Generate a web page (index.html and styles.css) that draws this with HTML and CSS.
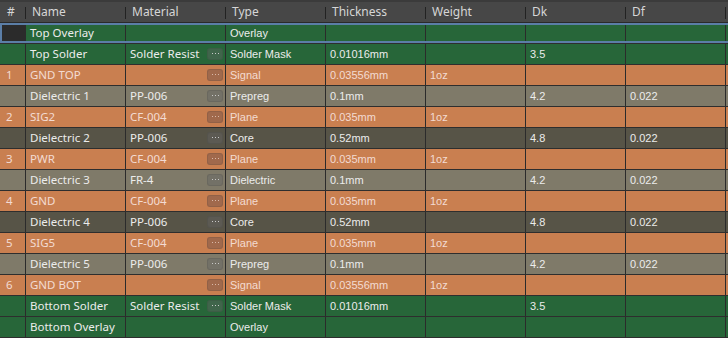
FILE: index.html
```html
<!DOCTYPE html>
<html>
<head>
<meta charset="utf-8">
<link rel="stylesheet" href="styles.css">
</head>
<body>
<div class="stack">
  <div class="row head">
    <div class="c num">#</div><div class="c">Name</div><div class="c">Material</div><div class="c">Type</div><div class="c">Thickness</div><div class="c">Weight</div><div class="c">Dk</div><div class="c">Df</div><div class="c last"></div>
  </div>

  <div class="row green selected">
    <div class="c num focus"></div><div class="c nm">Top Overlay</div><div class="c mat"></div><div class="c t">Overlay</div><div class="c t"></div><div class="c t"></div><div class="c t"></div><div class="c t"></div><div class="c last"></div>
  </div>
  <div class="row green">
    <div class="c num"></div><div class="c nm">Top Solder</div><div class="c mat"><span>Solder Resist</span><i class="btn"><svg width="7" height="2" viewBox="0 0 7 2"><rect x="0" y="0" width="1" height="1"/><rect x="3" y="0" width="1" height="1"/><rect x="6" y="0" width="1" height="1"/></svg></i></div><div class="c t">Solder Mask</div><div class="c t">0.01016mm</div><div class="c t"></div><div class="c t">3.5</div><div class="c t"></div><div class="c last"></div>
  </div>
  <div class="row orange">
    <div class="c num">1</div><div class="c nm">GND TOP</div><div class="c mat"><span></span><i class="btn"><svg width="7" height="2" viewBox="0 0 7 2"><rect x="0" y="0" width="1" height="1"/><rect x="3" y="0" width="1" height="1"/><rect x="6" y="0" width="1" height="1"/></svg></i></div><div class="c t">Signal</div><div class="c t">0.03556mm</div><div class="c t">1oz</div><div class="c t"></div><div class="c t"></div><div class="c last"></div>
  </div>
  <div class="row prepreg">
    <div class="c num"></div><div class="c nm">Dielectric 1</div><div class="c mat"><span>PP-006</span><i class="btn"><svg width="7" height="2" viewBox="0 0 7 2"><rect x="0" y="0" width="1" height="1"/><rect x="3" y="0" width="1" height="1"/><rect x="6" y="0" width="1" height="1"/></svg></i></div><div class="c t">Prepreg</div><div class="c t">0.1mm</div><div class="c t"></div><div class="c t">4.2</div><div class="c t">0.022</div><div class="c last"></div>
  </div>
  <div class="row orange">
    <div class="c num">2</div><div class="c nm">SIG2</div><div class="c mat"><span>CF-004</span><i class="btn"><svg width="7" height="2" viewBox="0 0 7 2"><rect x="0" y="0" width="1" height="1"/><rect x="3" y="0" width="1" height="1"/><rect x="6" y="0" width="1" height="1"/></svg></i></div><div class="c t">Plane</div><div class="c t">0.035mm</div><div class="c t">1oz</div><div class="c t"></div><div class="c t"></div><div class="c last"></div>
  </div>
  <div class="row core">
    <div class="c num"></div><div class="c nm">Dielectric 2</div><div class="c mat"><span>PP-006</span><i class="btn"><svg width="7" height="2" viewBox="0 0 7 2"><rect x="0" y="0" width="1" height="1"/><rect x="3" y="0" width="1" height="1"/><rect x="6" y="0" width="1" height="1"/></svg></i></div><div class="c t">Core</div><div class="c t">0.52mm</div><div class="c t"></div><div class="c t">4.8</div><div class="c t">0.022</div><div class="c last"></div>
  </div>
  <div class="row orange">
    <div class="c num">3</div><div class="c nm">PWR</div><div class="c mat"><span>CF-004</span><i class="btn"><svg width="7" height="2" viewBox="0 0 7 2"><rect x="0" y="0" width="1" height="1"/><rect x="3" y="0" width="1" height="1"/><rect x="6" y="0" width="1" height="1"/></svg></i></div><div class="c t">Plane</div><div class="c t">0.035mm</div><div class="c t">1oz</div><div class="c t"></div><div class="c t"></div><div class="c last"></div>
  </div>
  <div class="row prepreg">
    <div class="c num"></div><div class="c nm">Dielectric 3</div><div class="c mat"><span>FR-4</span><i class="btn"><svg width="7" height="2" viewBox="0 0 7 2"><rect x="0" y="0" width="1" height="1"/><rect x="3" y="0" width="1" height="1"/><rect x="6" y="0" width="1" height="1"/></svg></i></div><div class="c t">Dielectric</div><div class="c t">0.1mm</div><div class="c t"></div><div class="c t">4.2</div><div class="c t">0.022</div><div class="c last"></div>
  </div>
  <div class="row orange">
    <div class="c num">4</div><div class="c nm">GND</div><div class="c mat"><span>CF-004</span><i class="btn"><svg width="7" height="2" viewBox="0 0 7 2"><rect x="0" y="0" width="1" height="1"/><rect x="3" y="0" width="1" height="1"/><rect x="6" y="0" width="1" height="1"/></svg></i></div><div class="c t">Plane</div><div class="c t">0.035mm</div><div class="c t">1oz</div><div class="c t"></div><div class="c t"></div><div class="c last"></div>
  </div>
  <div class="row core">
    <div class="c num"></div><div class="c nm">Dielectric 4</div><div class="c mat"><span>PP-006</span><i class="btn"><svg width="7" height="2" viewBox="0 0 7 2"><rect x="0" y="0" width="1" height="1"/><rect x="3" y="0" width="1" height="1"/><rect x="6" y="0" width="1" height="1"/></svg></i></div><div class="c t">Core</div><div class="c t">0.52mm</div><div class="c t"></div><div class="c t">4.8</div><div class="c t">0.022</div><div class="c last"></div>
  </div>
  <div class="row orange">
    <div class="c num">5</div><div class="c nm">SIG5</div><div class="c mat"><span>CF-004</span><i class="btn"><svg width="7" height="2" viewBox="0 0 7 2"><rect x="0" y="0" width="1" height="1"/><rect x="3" y="0" width="1" height="1"/><rect x="6" y="0" width="1" height="1"/></svg></i></div><div class="c t">Plane</div><div class="c t">0.035mm</div><div class="c t">1oz</div><div class="c t"></div><div class="c t"></div><div class="c last"></div>
  </div>
  <div class="row prepreg">
    <div class="c num"></div><div class="c nm">Dielectric 5</div><div class="c mat"><span>PP-006</span><i class="btn"><svg width="7" height="2" viewBox="0 0 7 2"><rect x="0" y="0" width="1" height="1"/><rect x="3" y="0" width="1" height="1"/><rect x="6" y="0" width="1" height="1"/></svg></i></div><div class="c t">Prepreg</div><div class="c t">0.1mm</div><div class="c t"></div><div class="c t">4.2</div><div class="c t">0.022</div><div class="c last"></div>
  </div>
  <div class="row orange">
    <div class="c num">6</div><div class="c nm">GND BOT</div><div class="c mat"><span></span><i class="btn"><svg width="7" height="2" viewBox="0 0 7 2"><rect x="0" y="0" width="1" height="1"/><rect x="3" y="0" width="1" height="1"/><rect x="6" y="0" width="1" height="1"/></svg></i></div><div class="c t">Signal</div><div class="c t">0.03556mm</div><div class="c t">1oz</div><div class="c t"></div><div class="c t"></div><div class="c last"></div>
  </div>
  <div class="row green">
    <div class="c num"></div><div class="c nm">Bottom Solder</div><div class="c mat"><span>Solder Resist</span><i class="btn"><svg width="7" height="2" viewBox="0 0 7 2"><rect x="0" y="0" width="1" height="1"/><rect x="3" y="0" width="1" height="1"/><rect x="6" y="0" width="1" height="1"/></svg></i></div><div class="c t">Solder Mask</div><div class="c t">0.01016mm</div><div class="c t"></div><div class="c t">3.5</div><div class="c t"></div><div class="c last"></div>
  </div>
  <div class="row green">
    <div class="c num"></div><div class="c nm">Bottom Overlay</div><div class="c mat"></div><div class="c t">Overlay</div><div class="c t"></div><div class="c t"></div><div class="c t"></div><div class="c t"></div><div class="c last"></div>
  </div>
</div>
</body>
</html>
```
FILE: styles.css
```css
html, body {
  margin: 0;
  padding: 0;
  background: #2d2d2d;
  overflow: hidden;
}
.stack {
  width: 728px;
  height: 338px;
  display: flex;
  flex-direction: column;
  background: #2d2d2d;
}
.row {
  display: grid;
  grid-template-columns: 26px repeat(7, 100px) 1fr;
  height: 20px;
  border-bottom: 1px solid #2e2e2e;
  position: relative;
  color: #ececec;
}
.c {
  border-right: 1px solid #2b2b2b;
  padding-left: 4px;
  line-height: 20px;
  white-space: nowrap;
  overflow: hidden;
  font-family: "Noto Sans", "Open Sans", sans-serif;
  font-size: 11.5px;
}
.c.last { border-right: none; }
.c.num { padding-left: 6px; font-family: "Noto Sans", sans-serif; }
.c.t {
  font-family: "Liberation Sans", Arial, sans-serif;
  font-size: 11px;
}
.head {
  height: 20px;
  border-top: 2px solid #3b3b3b;
  border-bottom: 1px solid #2a2a2a;
  background: #474747;
  color: #d6d6d6;
}
.head .c {
  border-right: 1px solid transparent;
  padding-left: 6px;
  background: linear-gradient(#222, #222) right 5px / 1px 12px no-repeat;
  background-origin: border-box;
  background-clip: border-box;
  font-size: 12px;
  line-height: 20px;
}
.head .c.num { padding-left: 7px; }
.head .c.last { background: none; }
.green { background: #276639; }
.orange { background: #c97f50; color: #f3dbd2; }
.prepreg { background: #7f7a69; }
.core { background: #575447; }
.focus { background: #2b2b2b; }
.selected::after {
  content: "";
  position: absolute;
  left: 0; right: 0; top: 0; bottom: 0;
  border: 2px solid #5b7ea7;
  border-right: none;
  pointer-events: none;
}
.mat {
  display: flex;
  align-items: center;
  justify-content: space-between;
  padding-right: 2px;
}
.btn {
  display: flex;
  align-items: center;
  justify-content: center;
  width: 16px;
  height: 12px;
  border-radius: 3px;
  background: rgba(100, 100, 100, 0.42);
  box-shadow: inset 0 0 0 1px rgba(40, 40, 40, 0.12);
}
.btn svg { fill: #c9c9c9; display: block; }
.orange .btn { background: rgba(110, 80, 70, 0.45); }
.orange .btn svg { fill: #d9b8a8; }
```
